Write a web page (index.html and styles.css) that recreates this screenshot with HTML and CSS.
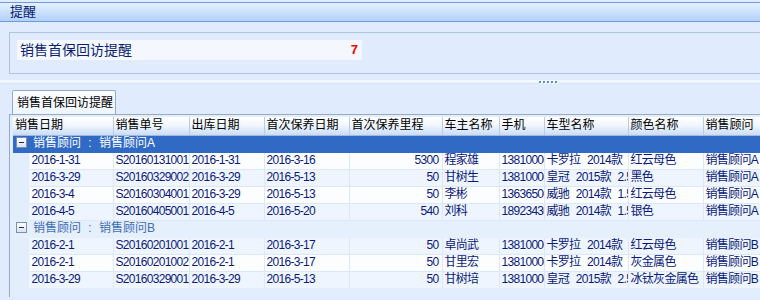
FILE: index.html
```html
<!DOCTYPE html>
<html lang="zh-CN">
<head>
  <meta charset="UTF-8" />
  <title>提醒</title>
  <link rel="stylesheet" href="styles.css">
</head>
<body>
  <div class="titlebar">提醒</div>

  <div class="summary">
    <div class="summary-row">
      <span>销售首保回访提醒</span>
      <span class="count">7</span>
    </div>
  </div>

  <div class="splitter">
    <i></i><i></i><i></i><i></i><i></i>
  </div>

  <div class="tabs">
    <div class="tab">销售首保回访提醒</div>
  </div>

  <div class="panel">
    <div class="grid">
      <table>
        <colgroup>
          <col style="width:16px"><col style="width:84px"><col style="width:76px"><col style="width:75px">
          <col style="width:85px"><col style="width:93px"><col style="width:57px"><col style="width:45px">
          <col style="width:84px"><col style="width:75px"><col style="width:80px">
        </colgroup>
        <thead>
          <tr>
            <th colspan="2">销售日期</th><th>销售单号</th><th>出库日期</th><th>首次保养日期</th>
            <th>首次保养里程</th><th>车主名称</th><th>手机</th><th>车型名称</th><th>颜色名称</th><th>销售顾问</th>
          </tr>
        </thead>
        <tbody>
          <tr class="group focused">
            <td colspan="11"><span class="toggle"></span>销售顾问 : 销售顾问A</td>
          </tr>
          <tr class="odd">
            <td class="indent"></td><td>2016-1-31</td><td>S20160131001</td><td>2016-1-31</td><td>2016-3-16</td>
            <td class="num">5300</td><td>程家雄</td><td>13810000001</td><td>卡罗拉 2014款 1.6</td><td>红云母色</td><td>销售顾问A</td>
          </tr>
          <tr class="even">
            <td class="indent"></td><td>2016-3-29</td><td>S20160329002</td><td>2016-3-29</td><td>2016-5-13</td>
            <td class="num">50</td><td>甘树生</td><td>13810000002</td><td>皇冠 2015款 2.5</td><td>黑色</td><td>销售顾问A</td>
          </tr>
          <tr class="odd">
            <td class="indent"></td><td>2016-3-4</td><td>S20160304001</td><td>2016-3-29</td><td>2016-5-13</td>
            <td class="num">50</td><td>李彬</td><td>13636500001</td><td>威驰 2014款 1.5</td><td>红云母色</td><td>销售顾问A</td>
          </tr>
          <tr class="even">
            <td class="indent"></td><td>2016-4-5</td><td>S20160405001</td><td>2016-4-5</td><td>2016-5-20</td>
            <td class="num">540</td><td>刘科</td><td>18923430001</td><td>威驰 2014款 1.5</td><td>银色</td><td>销售顾问A</td>
          </tr>
          <tr class="group">
            <td colspan="11"><span class="toggle"></span>销售顾问 : 销售顾问B</td>
          </tr>
          <tr class="even">
            <td class="indent"></td><td>2016-2-1</td><td>S20160201001</td><td>2016-2-1</td><td>2016-3-17</td>
            <td class="num">50</td><td>卓尚武</td><td>13810000003</td><td>卡罗拉 2014款 1.6</td><td>红云母色</td><td>销售顾问B</td>
          </tr>
          <tr class="odd">
            <td class="indent"></td><td>2016-2-1</td><td>S20160201002</td><td>2016-2-1</td><td>2016-3-17</td>
            <td class="num">50</td><td>甘里宏</td><td>13810000004</td><td>卡罗拉 2014款 1.6</td><td>灰金属色</td><td>销售顾问B</td>
          </tr>
          <tr class="even">
            <td class="indent"></td><td>2016-3-29</td><td>S20160329001</td><td>2016-3-29</td><td>2016-5-13</td>
            <td class="num">50</td><td>甘树培</td><td>13810000005</td><td>皇冠 2015款 2.5</td><td>冰钛灰金属色</td><td>销售顾问B</td>
          </tr>
        </tbody>
      </table>
    </div>
  </div>
</body>
</html>
```

FILE: styles.css
```css
body {
  margin: 0;
  height: 300px;
  overflow: hidden;
  background: #e0ecfd;
  font-family: "Liberation Sans", "Noto Sans CJK SC", sans-serif;
  font-size: 12px;
  color: #0a1a78;
}
.titlebar {
  margin-top: 2px;
  height: 18px;
  line-height: 18px;
  padding-left: 10px;
  border-top: 1px solid #6c9bd6;
  border-bottom: 1px solid #6c9bd6;
  background: linear-gradient(#e4f0fe, #b2d1fb);
  font-size: 13px;
  color: #0b1e6e;
}
.summary {
  margin: 10px 0 0 9px;
  border: 1px solid #b0c3dc;
  border-right: none;
  padding: 7px 0 0 7px;
  box-sizing: border-box;
  height: 42px;
}
.summary-row {
  width: 345px;
  height: 20px;
  background: #f4f8fe;
  display: flex;
  justify-content: space-between;
  align-items: center;
  padding: 0 4px 0 3px;
  box-sizing: border-box;
  font-size: 14px;
  line-height: 20px;
  color: #0b1e6e;
}
.count {
  color: #f00000;
  font-weight: bold;
  font-size: 13px;
}
.splitter {
  margin-top: 6px;
  height: 4px;
  background: linear-gradient(#f4f9ff, #f4f9ff 50%, #cfe0f8);
  display: flex;
  justify-content: center;
  align-items: center;
  gap: 2px;
  padding-left: 336px;
}
.splitter i {
  width: 2px;
  height: 2px;
  background: #5a8fd8;
  box-shadow: 1px 1px 0 #fff;
}
.tabs {
  margin-top: 6px;
  padding-left: 12px;
  height: 24px;
  display: flex;
}
.tab {
  width: 104px;
  height: 24px;
  box-sizing: border-box;
  border: 1px solid #97abc7;
  border-bottom: none;
  border-radius: 2px 2px 0 0;
  background: linear-gradient(#fbfdff, #eef5fe);
  padding: 3px 0 0 4px;
  line-height: 18px;
  color: #000;
  position: relative;
  z-index: 1;
  margin-bottom: -1px;
}
.panel {
  margin-left: 9px;
  height: 183px;
  border-top: 1px solid #97abc7;
  border-left: 1px solid #97abc7;
  background: #e3eefd;
  padding: 2px 0 0 3px;
  box-sizing: border-box;
}
.grid {
  overflow: hidden;
  height: 171px;
  background: #e3eefd;
}
table {
  table-layout: fixed;
  border-collapse: collapse;
  width: 770px;
}
th, td {
  overflow: hidden;
  white-space: nowrap;
  padding: 0 0 0 2px;
  text-align: left;
  line-height: 15px;
}
th {
  height: 18px;
  font-weight: normal;
  color: #000;
  background: linear-gradient(#ffffff, #f2f7fe 45%, #c9dcf6);
  border-right: 1px solid #b8cce8;
  border-bottom: 1px solid #9fb8dc;
  box-sizing: border-box;
}
td {
  height: 17px;
  box-sizing: border-box;
  letter-spacing: -0.7px;
  word-spacing: 4px;
  border-right: 1px solid #dbe7fa;
  border-bottom: 1px solid #dbe7fa;
}
tr.odd td { background: #fbfdff; }
tr.even td { background: #eef5fe; }
td.indent {
  background: #e3eefd !important;
  border-right: 1px solid #eef5fe;
  border-bottom: none;
}
td.num {
  text-align: right;
  padding: 0 3px 0 0;
}
tr.group td {
  color: #3e6db3;
  background: #e6f0fd;
  padding-left: 3px;
  letter-spacing: 0;
  word-spacing: 4px;
  border-bottom: 1px solid #e6f0fd;
}
tr.group.focused td {
  color: #fff;
  background: #316ac5;
  border-top: 1px dotted #f0a030;
  border-bottom: 1px solid #316ac5;
}
.toggle {
  display: inline-block;
  width: 9px;
  height: 9px;
  border: 1px solid #7a8fad;
  background: linear-gradient(#ffffff, #d8e2ee);
  vertical-align: -1px;
  margin-right: 6px;
  position: relative;
}
.toggle::after {
  content: "";
  position: absolute;
  left: 2px;
  top: 4px;
  width: 5px;
  height: 1px;
  background: #1a2a50;
}
```
